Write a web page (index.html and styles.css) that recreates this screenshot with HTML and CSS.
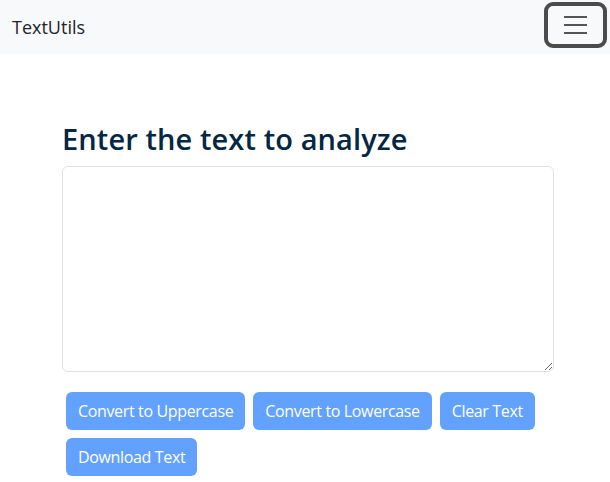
FILE: index.html
```html
<!DOCTYPE html>
<html lang="en">
<head>
<meta charset="utf-8">
<title>TextUtils</title>
<link rel="stylesheet" href="styles.css">
</head>
<body>
<nav class="navbar">
  <a class="brand" href="#">TextUtils</a>
  <button class="toggler" type="button" aria-label="Toggle navigation">
    <svg width="23" height="20" viewBox="0 0 23 20" aria-hidden="true">
      <path d="M0 2h23M0 10h23M0 18h23" stroke="#555" stroke-width="2" fill="none"/>
    </svg>
  </button>
</nav>
<main class="container">
  <div class="alert-space"></div>
  <h1 class="title">Enter the text to analyze</h1>
  <textarea class="box" rows="8"></textarea>
  <div class="actions">
    <button class="btn" disabled>Convert to Uppercase</button>
    <button class="btn" disabled>Convert to Lowercase</button>
    <button class="btn" disabled>Clear Text</button>
    <button class="btn" disabled>Download Text</button>
  </div>
</main>
</body>
</html>
```
FILE: styles.css
```css
* { box-sizing: border-box; }
body {
  margin: 0;
  font-family: "Open Sans", "Noto Sans", sans-serif;
  color: #212529;
  background: #fff;
}
.navbar {
  height: 54px;
  background: #f8f9fa;
  display: flex;
  align-items: center;
  justify-content: space-between;
  padding: 0 3px 0 12px;
}
.brand {
  font-size: 18px;
  color: #212529;
  text-decoration: none;
}
.toggler {
  width: 63px;
  height: 46px;
  margin-top: -4px;
  border: 4px solid #4b4b4b;
  border-radius: 9px;
  background: transparent;
  display: flex;
  align-items: center;
  justify-content: center;
  padding: 0;
}
.container {
  padding: 16px 56px 0 62px;
}
.alert-space { height: 50px; }
.title {
  margin: 0 0 8px;
  font-size: 29px;
  font-weight: 600;
  line-height: 38px;
  color: #042743;
  letter-spacing: 0.1px;
}
.box {
  display: block;
  width: 492px;
  height: 206px;
  border: 1px solid #dee2e6;
  border-radius: 6px;
  padding: 6px 12px;
  font: inherit;
  margin-bottom: 16px;
  resize: vertical;
}
.actions {
  display: flex;
  flex-wrap: wrap;
}
.btn {
  margin: 4px;
  height: 38px;
  padding: 0 12px;
  border: 0;
  border-radius: 6px;
  background: #62a1fe;
  color: #fff;
  font-family: inherit;
  font-size: 16px;
  letter-spacing: -0.35px;
}
```
